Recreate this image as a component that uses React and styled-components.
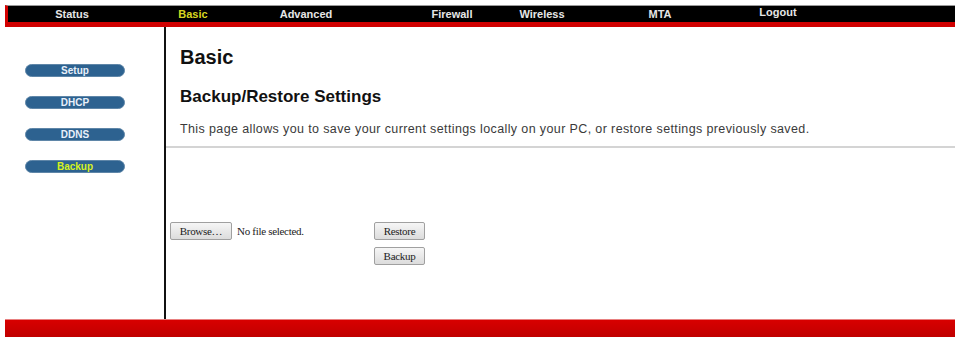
import React from "react";
import styled, { createGlobalStyle } from "styled-components";

const GlobalStyle = createGlobalStyle`
  body {
    margin: 0;
    background: #ffffff;
    font-family: "Liberation Sans", Arial, sans-serif;
  }
`;

// 상단 메뉴
const menus = [
  { label: "Status", left: 24 },
  { label: "Basic", left: 41, active: true },
  { label: "Advanced", left: 33 },
  { label: "Firewall", left: 66 },
  { label: "Wireless", left: 10 },
  { label: "MTA", left: 38 },
  { label: "Logout", left: 38, up: true },
];

const sideMenus = [
  { label: "Setup" },
  { label: "DHCP" },
  { label: "DDNS" },
  { label: "Backup", active: true },
];

const App = () => {
  return (
    <React.Fragment>
      <GlobalStyle />
      <Page>
        <TopBar>
          {menus.map((m) => (
            <NavItem key={m.label} $left={m.left} $active={m.active} $up={m.up}>
              {m.label}
            </NavItem>
          ))}
        </TopBar>
        <Body>
          <SideBar>
            {sideMenus.map((m) => (
              <SideButton key={m.label} $active={m.active}>
                {m.label}
              </SideButton>
            ))}
          </SideBar>
          <Main>
            <Intro>
              <Title>Basic</Title>
              <SubTitle>Backup/Restore Settings</SubTitle>
              <Desc>
                This page allows you to save your current settings locally on
                your PC, or restore settings previously saved.
              </Desc>
            </Intro>
            <FormArea>
              <FileGroup>
                <FormButton>Browse…</FormButton>
                <FileName>No file selected.</FileName>
              </FileGroup>
              <ButtonColumn>
                <FormButton $wide>Restore</FormButton>
                <FormButton $wide>Backup</FormButton>
              </ButtonColumn>
            </FormArea>
          </Main>
        </Body>
        <BottomBar />
      </Page>
    </React.Fragment>
  );
};

const Page = styled.div`
  width: 960px;
  height: 345px;
  display: flex;
  flex-direction: column;
  padding-top: 5px;
  box-sizing: border-box;
`;
const TopBar = styled.div`
  margin: 0 5px;
  height: 22px;
  box-sizing: border-box;
  background: #000000;
  border-top: 1px solid #9a9a9a;
  border-left: 3px solid #d40000;
  border-bottom: 5px solid #d00000;
  display: flex;
  align-items: center;
`;
const NavItem = styled.div`
  width: 80px;
  margin-left: ${(p) => p.$left}px;
  text-align: center;
  font-size: 11px;
  font-weight: bold;
  color: ${(p) => (p.$active ? "#d8d820" : "#e6e6e6")};
  padding-bottom: ${(p) => (p.$up ? "5px" : "0")};
  white-space: nowrap;
`;
const Body = styled.div`
  height: 292px;
  display: flex;
`;
const SideBar = styled.div`
  width: 166px;
  flex-shrink: 0;
  padding: 37px 0 0 25px;
  box-sizing: border-box;
  display: flex;
  flex-direction: column;
  gap: 19px;
  border-right: 2px solid #111111;
`;
const SideButton = styled.div`
  width: 100px;
  height: 13px;
  box-sizing: border-box;
  border-radius: 7px;
  background: #2d6290;
  border: 1px solid #5f86a8;
  color: ${(p) => (p.$active ? "#d6f21e" : "#e8f0fa")};
  font-size: 10px;
  font-weight: bold;
  line-height: 11px;
  text-align: center;
`;
const Main = styled.div`
  flex: 1;
  margin-right: 5px;
  display: flex;
  flex-direction: column;
`;
const Intro = styled.div`
  padding: 18px 0 0 14px;
  height: 121px;
  box-sizing: border-box;
  border-bottom: 2px solid #d4d4d4;
`;
const Title = styled.div`
  font-size: 20px;
  font-weight: bold;
  line-height: 24px;
  color: #111111;
`;
const SubTitle = styled.div`
  margin-top: 18px;
  font-size: 17px;
  font-weight: bold;
  line-height: 20px;
  color: #111111;
`;
const Desc = styled.div`
  margin-top: 14px;
  font-size: 12.5px;
  letter-spacing: 0.38px;
  line-height: 16px;
  color: #3a3a3a;
  white-space: nowrap;
`;
const FormArea = styled.div`
  padding: 74px 0 0 4px;
  display: flex;
  align-items: flex-start;
`;
const FileGroup = styled.div`
  width: 204px;
  display: flex;
  align-items: center;
  gap: 5px;
`;
const FileName = styled.span`
  font-family: "Liberation Serif", "Times New Roman", serif;
  font-size: 11px;
  color: #222222;
  letter-spacing: -0.3px;
`;
const ButtonColumn = styled.div`
  display: flex;
  flex-direction: column;
  gap: 7px;
`;
const FormButton = styled.button`
  width: ${(p) => (p.$wide ? "51px" : "62px")};
  height: 18px;
  padding: 0;
  box-sizing: border-box;
  border: 1px solid #a0a0a0;
  border-radius: 2px;
  background: linear-gradient(#f6f6f6, #dcdcdc);
  font-family: "Liberation Serif", "Times New Roman", serif;
  font-size: 11px;
  color: #222222;
  letter-spacing: -0.3px;
`;
const BottomBar = styled.div`
  margin: 0 5px;
  height: 18px;
  background: linear-gradient(#d80000, #c00000);
  border-top: 1px solid #e88080;
  box-sizing: border-box;
`;

export default App;
